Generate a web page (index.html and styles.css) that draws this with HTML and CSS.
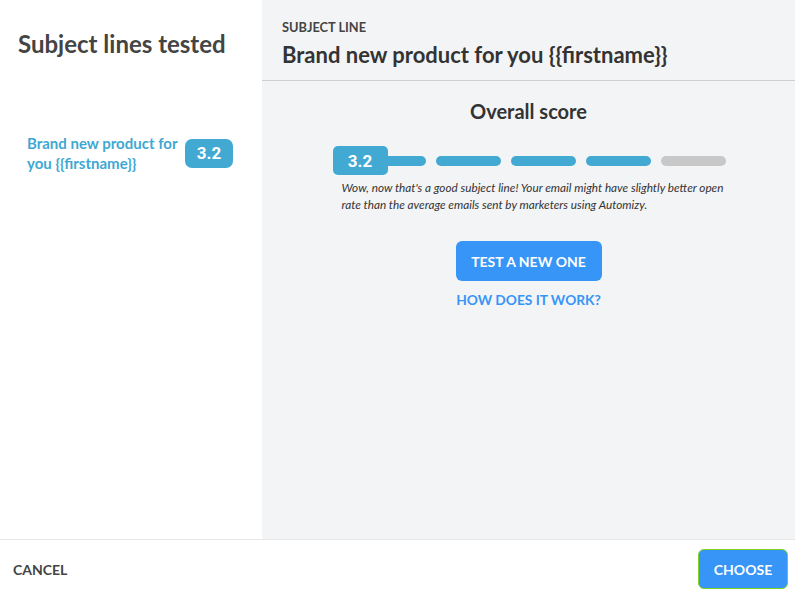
FILE: index.html
```html
<!DOCTYPE html>
<html>
<head>
<meta charset="utf-8">
<link rel="stylesheet" href="styles.css">
</head>
<body>
<div class="modal">
  <div class="main">
    <aside class="left">
      <h1 class="left-title">Subject lines tested</h1>
      <div class="item">
        <div class="item-text">Brand new product for you {{firstname}}</div>
        <div class="item-badge">3.2</div>
      </div>
    </aside>
    <section class="right">
      <header class="head">
        <div class="label">SUBJECT LINE</div>
        <div class="subject">Brand new product for you {{firstname}}</div>
      </header>
      <div class="content">
        <h2 class="overall">Overall score</h2>
        <div class="score">
          <div class="bar">
            <div class="bar-badge">3.2</div>
            <div class="segments">
              <span class="seg on"></span>
              <span class="seg on"></span>
              <span class="seg on"></span>
              <span class="seg on"></span>
              <span class="seg"></span>
            </div>
          </div>
          <p class="desc">Wow, now that's a good subject line! Your email might have slightly better open rate than the average emails sent by marketers using Automizy.</p>
        </div>
        <button class="btn-test">TEST A NEW ONE</button>
        <a class="how">HOW DOES IT WORK?</a>
      </div>
    </section>
  </div>
  <footer class="foot">
    <span class="cancel">CANCEL</span>
    <button class="choose">CHOOSE</button>
  </footer>
</div>
</body>
</html>
```

FILE: styles.css
```css
* { box-sizing: border-box; }
html, body { margin: 0; padding: 0; }
body {
  font-family: Lato, "Open Sans", sans-serif;
  color: #333;
  background: #fff;
}
.modal {
  width: 795px;
  height: 598px;
  display: flex;
  flex-direction: column;
}
.main {
  flex: 1;
  display: flex;
  min-height: 0;
}
.left {
  width: 262px;
  background: #fff;
}
.left-title {
  margin: 0;
  padding: 30px 0 0 18px;
  font-size: 24px;
  line-height: 28px;
  font-weight: 700;
  color: #444;
}
.item {
  display: flex;
  align-items: center;
  margin-top: 75px;
  padding-left: 27px;
}
.item-text {
  width: 158px;
  font-size: 15px;
  line-height: 20px;
  font-weight: 700;
  color: #3fa8d2;
}
.item-badge {
  width: 48px;
  height: 29px;
  border-radius: 7px;
  background: #42aad2;
  color: #fff;
  font-family: Roboto, sans-serif;
  font-weight: 700;
  font-size: 17px;
  display: flex;
  align-items: center;
  justify-content: center;
}
.right {
  flex: 1;
  background: #f3f4f6;
  display: flex;
  flex-direction: column;
}
.head {
  padding: 19px 20px 11px;
  border-bottom: 1px solid #cfd0d2;
}
.label {
  font-size: 12.8px;
  line-height: 16px;
  font-weight: 700;
  color: #444;
}
.subject {
  margin-top: 6px;
  font-size: 22px;
  line-height: 28px;
  font-weight: 700;
  color: #333;
}
.content {
  display: flex;
  flex-direction: column;
  align-items: center;
}
.overall {
  margin: 18px 0 0;
  font-size: 20px;
  line-height: 24px;
  font-weight: 700;
  color: #333;
}
.score {
  width: 392px;
  margin-top: 23px;
}
.bar {
  position: relative;
  height: 29px;
  display: flex;
  align-items: center;
}
.bar-badge {
  position: absolute;
  left: 0;
  top: 0;
  width: 55px;
  height: 29px;
  border-radius: 5px;
  background: #42aad2;
  color: #fff;
  font-family: Roboto, sans-serif;
  font-weight: 700;
  font-size: 17px;
  display: flex;
  align-items: center;
  justify-content: center;
  z-index: 1;
}
.segments {
  display: flex;
  gap: 10px;
  margin-left: 28px;
}
.seg {
  width: 65px;
  height: 10px;
  border-radius: 5px;
  background: #c8c8c8;
}
.seg.on { background: #42aad2; }
.desc {
  margin: 4px 0 0;
  padding-left: 9px;
  font-size: 11.75px;
  line-height: 17px;
  font-style: italic;
  color: #333;
}
.btn-test {
  margin-top: 28px;
  width: 146px;
  height: 40px;
  border: none;
  border-radius: 6px;
  background: #3795f7;
  color: #fff;
  font-family: Lato, sans-serif;
  font-weight: 700;
  font-size: 14px;
  padding: 0;
}
.how {
  margin-top: 10px;
  font-size: 13.75px;
  line-height: 18px;
  font-weight: 700;
  color: #3795f7;
}
.foot {
  height: 59px;
  border-top: 1px solid #e6e7e9;
  background: #fff;
  display: flex;
  align-items: center;
  justify-content: space-between;
  padding: 0 7px 0 13px;
}
.cancel {
  font-size: 14px;
  font-weight: 700;
  color: #444;
}
.choose {
  width: 90px;
  height: 40px;
  border: 1px solid #7ed321;
  border-radius: 6px;
  background: #3795f7;
  color: #fff;
  font-family: Lato, sans-serif;
  font-weight: 700;
  font-size: 14px;
  padding: 0;
}
```
